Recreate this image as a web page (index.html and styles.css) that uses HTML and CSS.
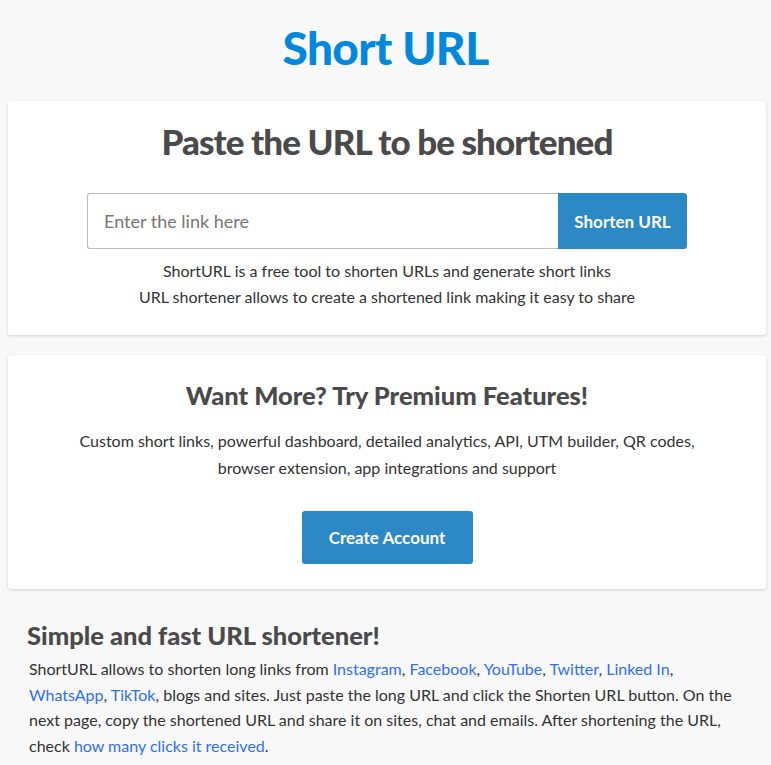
FILE: index.html
```html
<!DOCTYPE html>
<html lang="en">
<head>
<meta charset="utf-8">
<title>Short URL</title>
<link rel="stylesheet" href="styles.css">
</head>
<body>
<header class="top">
  <h1 class="logo">Short URL</h1>
</header>
<main class="main">
  <section class="card card-shorten">
    <h2 class="card-title">Paste the URL to be shortened</h2>
    <form class="form">
      <input class="form-input" type="text" placeholder="Enter the link here">
      <button class="form-btn" type="button">Shorten URL</button>
    </form>
    <p class="card-text">ShortURL is a free tool to shorten URLs and generate short links<br>URL shortener allows to create a shortened link making it easy to share</p>
  </section>
  <section class="card card-premium">
    <h2 class="card-subtitle">Want More? Try Premium Features!</h2>
    <p class="card-text card-text-wide">Custom short links, powerful dashboard, detailed analytics, API, UTM builder, QR codes,<br>browser extension, app integrations and support</p>
    <a class="btn" href="#">Create Account</a>
  </section>
  <section class="info">
    <h2 class="info-title">Simple and fast URL shortener!</h2>
    <p class="info-text">ShortURL allows to shorten long links from <a href="#">Instagram</a>, <a href="#">Facebook</a>, <a href="#">YouTube</a>, <a href="#">Twitter</a>, <a href="#">Linked In</a>, <a href="#">WhatsApp</a>, <a href="#">TikTok</a>, blogs and sites. Just paste the long URL and click the Shorten URL button. On the next page, copy the shortened URL and share it on sites, chat and emails. After shortening the URL, check <a href="#">how many clicks it received</a>.</p>
  </section>
</main>
</body>
</html>
```
FILE: styles.css
```css
* { box-sizing: border-box; }
html, body { margin: 0; padding: 0; }
body {
  background: #f8f8f8;
  font-family: "Lato", "Liberation Sans", sans-serif;
  color: #333;
}
.top { padding-top: 20px; text-align: center; }
.logo {
  margin: 0;
  font-size: 46px;
  line-height: 56px;
  font-weight: 900;
  color: #0088dd;
  letter-spacing: -0.6px;
}
.main { padding: 25px 5px 0 8px; }
.card {
  background: #fff;
  border-radius: 3px;
  box-shadow: 0 1px 3px rgba(0,0,0,0.16);
  text-align: center;
}
.card-shorten { padding: 18px 0 22px; height: 234px; }
.card-premium { margin-top: 20px; padding: 22px 0 26px; height: 234px; }
.card-title {
  margin: 0;
  font-size: 35px;
  line-height: 44px;
  font-weight: 900;
  color: #4a4a4a;
  letter-spacing: -0.9px;
}
.form {
  display: flex;
  width: 600px;
  margin: 30px auto 0;
  height: 56px;
}
.form-input {
  flex: 1;
  height: 56px;
  border: 1px solid #bdbdbd;
  border-right: 0;
  border-radius: 3px 0 0 3px;
  padding: 0 16px;
  font-family: "Lato", sans-serif;
  font-size: 18px;
  color: #333;
  outline: none;
}
.form-input::placeholder { color: #777; }
.form-btn {
  width: 129px;
  height: 56px;
  border: 0;
  border-radius: 0 3px 3px 0;
  background: #2d88c6;
  color: #fff;
  font-family: "Lato", sans-serif;
  font-size: 17px;
  font-weight: 700;
}
.card-text {
  margin: 9px 0 0;
  font-size: 16px;
  line-height: 26px;
  color: #333;
}
.card-subtitle {
  margin: 0;
  font-size: 25.5px;
  line-height: 36px;
  font-weight: 900;
  color: #4a4a4a;
}
.card-text-wide { margin-top: 14px; line-height: 27px; }
.btn {
  display: inline-block;
  margin-top: 30px;
  width: 171px;
  height: 53px;
  line-height: 53px;
  border-radius: 3px;
  background: #2d88c6;
  color: #fff;
  font-size: 17px;
  font-weight: 700;
  text-decoration: none;
}
.info { padding: 28px 20px 0 21px; }
.info-title {
  margin: 0 0 0 -2px;
  font-size: 25.5px;
  line-height: 36px;
  font-weight: 900;
  color: #4a4a4a;
}
.info-text {
  margin: 3px 0 0;
  font-size: 16px;
  line-height: 25.5px;
  color: #333;
}
.info-text a { color: #2e6ff5; text-decoration: none; }
```
